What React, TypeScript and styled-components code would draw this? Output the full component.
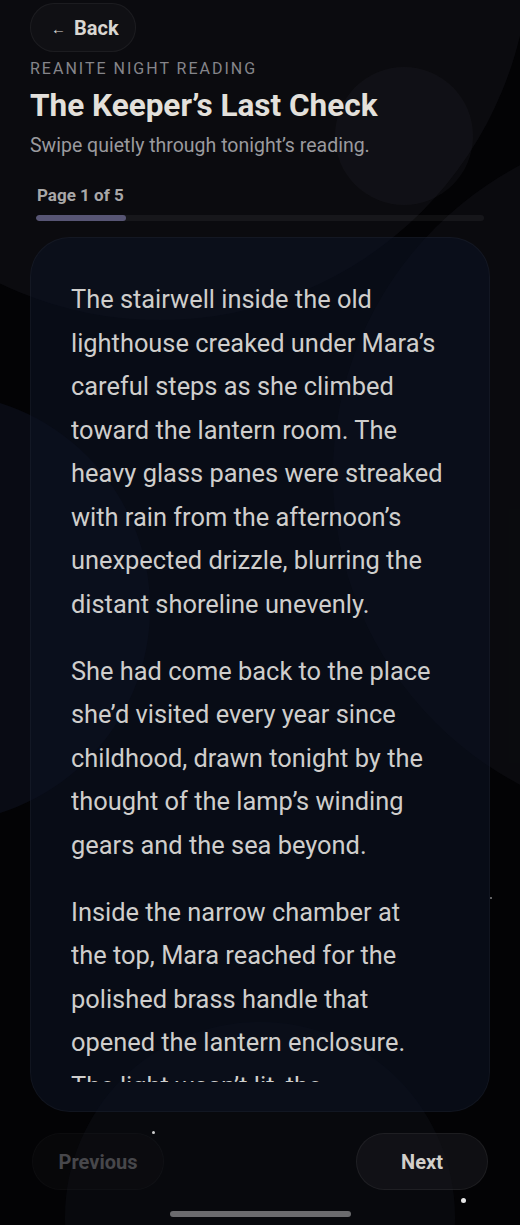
import React from "react";
import styled, { createGlobalStyle } from "styled-components";

const Global = createGlobalStyle`
  html, body { margin: 0; padding: 0; background: #030305; }
  * { box-sizing: border-box; }
  body { font-family: Roboto, "Noto Sans", "Liberation Sans", sans-serif; -webkit-font-smoothing: antialiased; }
`;

const Screen = styled.div`
  position: relative;
  width: 520px;
  height: 1225px;
  overflow: hidden;
  background: #030305;
`;

const Glow = styled.div<{ $x: number; $y: number; $size: number; $color: string }>`
  position: absolute;
  left: ${(p) => p.$x}px;
  top: ${(p) => p.$y}px;
  width: ${(p) => p.$size}px;
  height: ${(p) => p.$size}px;
  border-radius: 50%;
  background: ${(p) => p.$color};
  pointer-events: none;
`;

const Speck = styled.div<{ $x: number; $y: number; $size: number; $alpha: number }>`
  position: absolute;
  left: ${(p) => p.$x}px;
  top: ${(p) => p.$y}px;
  width: ${(p) => p.$size}px;
  height: ${(p) => p.$size}px;
  border-radius: 50%;
  background: rgba(255, 255, 255, ${(p) => p.$alpha});
`;

const Column = styled.div`
  position: relative;
  display: flex;
  flex-direction: column;
  padding: 3px 30px 0 30px;
`;

const BackButton = styled.button`
  align-self: flex-start;
  display: flex;
  align-items: center;
  gap: 8px;
  height: 49px;
  width: 106px;
  padding: 0 0 0 20px;
  border-radius: 25px;
  border: 1px solid rgba(255, 255, 255, 0.05);
  background: rgba(22, 22, 26, 0.55);
  color: #d9d6d1;
  font-family: Roboto, sans-serif;
  font-weight: 700;
  font-size: 20px;
`;

const Arrow = styled.span`
  font-size: 15px;
  font-weight: 700;
  margin-top: 3px;
`;

const Eyebrow = styled.div`
  margin-top: 7px;
  font-size: 16px;
  line-height: 20px;
  letter-spacing: 2px;
  color: #85858a;
  text-transform: uppercase;
`;

const Title = styled.h1`
  margin: 8px 0 0;
  font-size: 31.5px;
  line-height: 38px;
  font-weight: 700;
  color: #e3e0db;
`;

const Subtitle = styled.p`
  margin: 9px 0 0;
  font-size: 19.5px;
  line-height: 24px;
  color: #9a9a9e;
`;

const PageLabel = styled.div`
  margin: 27px 0 0 7px;
  font-size: 17px;
  line-height: 20px;
  font-weight: 700;
  color: #a9a8a8;
`;

const Track = styled.div`
  margin: 10px 6px 0;
  height: 6px;
  border-radius: 3px;
  background: rgba(255, 255, 255, 0.05);
  overflow: hidden;
`;

const Fill = styled.div`
  height: 100%;
  border-radius: 3px;
  background: #575574;
`;

const Card = styled.article`
  margin-top: 16px;
  height: 875px;
  display: flex;
  flex-direction: column;
  padding: 40px 40px 29px 40px;
  border-radius: 40px;
  background: rgba(12, 18, 34, 0.62);
  border: 1px solid rgba(255, 255, 255, 0.04);
  overflow: hidden;
`;

const Story = styled.div`
  flex: 1;
  overflow: hidden;
`;

const Para = styled.p`
  margin: 0 0 23.5px;
  font-size: 25.4px;
  line-height: 43.5px;
  color: #cfcecc;
`;

const Nav = styled.div`
  margin-top: 21px;
  display: flex;
  justify-content: space-between;
  padding: 0 2px;
`;

const NavButton = styled.button<{ $disabled?: boolean }>`
  width: 132px;
  height: 57px;
  border-radius: 29px;
  font-family: Roboto, sans-serif;
  font-size: 20px;
  font-weight: 700;
  border: 1px solid rgba(255, 255, 255, ${(p) => (p.$disabled ? 0.025 : 0.06)});
  background: ${(p) => (p.$disabled ? "rgba(20,20,24,0.25)" : "rgba(24,24,28,0.6)")};
  color: ${(p) => (p.$disabled ? "#47474b" : "#d2cfca")};
`;

const HomeBar = styled.div`
  align-self: center;
  margin-top: 21px;
  width: 181px;
  height: 6px;
  border-radius: 3px;
  background: #6b6b6e;
`;

export default function App() {
  const progress = (1 / 5) * 100;
  return (
    <Screen>
      <Global />
      <Glow $x={-210} $y={-420} $size={740} $color="rgba(24,24,30,0.42)" />
      <Glow $x={333} $y={125} $size={700} $color="rgba(26,28,36,0.3)" />
      <Glow $x={335} $y={67} $size={138} $color="rgba(40,40,48,0.2)" />
      <Glow $x={-280} $y={393} $size={430} $color="rgba(14,18,32,0.55)" />
      <Glow $x={65} $y={1022} $size={390} $color="rgba(24,28,40,0.25)" />
      <Column>
        <BackButton>
          <Arrow>←</Arrow>Back
        </BackButton>
        <Eyebrow>Reanite Night Reading</Eyebrow>
        <Title>The Keeper’s Last Check</Title>
        <Subtitle>Swipe quietly through tonight’s reading.</Subtitle>
        <PageLabel>Page 1 of 5</PageLabel>
        <Track>
          <Fill style={{ width: `${progress}%` }} />
        </Track>
        <Card>
          <Story>
            <Para>
              The stairwell inside the old lighthouse creaked under Mara’s careful steps as she climbed
              toward the lantern room. The heavy glass panes were streaked with rain from the
              afternoon’s unexpected drizzle, blurring the distant shoreline unevenly.
            </Para>
            <Para>
              She had come back to the place she’d visited every year since childhood, drawn tonight
              by the thought of the lamp’s winding gears and the sea beyond.
            </Para>
            <Para>
              Inside the narrow chamber at
              <br />
              the top, Mara reached for the polished brass handle that opened the lantern enclosure.
              The light wasn’t lit, the mechanism resting quietly until the keeper’s final check of
              the night.
            </Para>
          </Story>
        </Card>
        <Nav>
          <NavButton $disabled disabled>
            Previous
          </NavButton>
          <NavButton>Next</NavButton>
        </Nav>
        <HomeBar />
      </Column>
      <Speck $x={152} $y={1131} $size={3} $alpha={0.8} />
      <Speck $x={461} $y={1198} $size={5} $alpha={0.9} />
      <Speck $x={490} $y={897} $size={2} $alpha={0.5} />
    </Screen>
  );
}
